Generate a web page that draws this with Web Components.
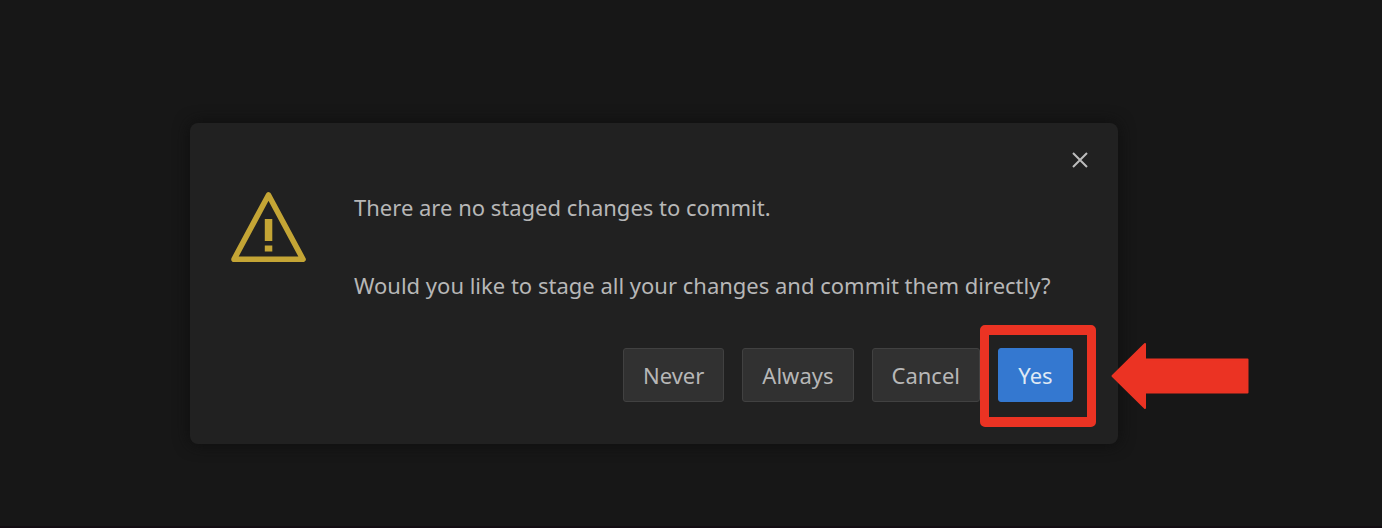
<!DOCTYPE html>
<html lang="en">
<head>
<meta charset="utf-8">
<meta name="viewport" content="width=device-width, initial-scale=1">
<title>Commit changes</title>
<style>
  html { height: 100%; }
  body { margin: 0; min-height: 100%; display: flex; background: #171717; color: #b7b7b7; font: 22px/39px "Noto Sans", "Open Sans", sans-serif; }
</style>
</head>
<body>
<app-backdrop>
  <message-dialog>
    <warning-icon slot="icon"></warning-icon>
    <p>There are no staged changes to commit.</p>
    <p>Would you like to stage all your changes and commit them directly?</p>
    <dialog-button slot="actions">Never</dialog-button>
    <dialog-button slot="actions">Always</dialog-button>
    <dialog-button slot="actions">Cancel</dialog-button>
    <callout-marker slot="actions"><dialog-button primary>Yes</dialog-button></callout-marker>
  </message-dialog>
</app-backdrop>
<script>
const define = (name, html) => {
  const template = document.createElement('template');
  template.innerHTML = html;
  customElements.define(name, class extends HTMLElement {
    constructor() {
      super();
      this.attachShadow({ mode: 'open' }).append(template.content.cloneNode(true));
    }
  });
};

define('app-backdrop', `
  <style>
    :host { box-sizing: border-box; flex: 1; display: flex; justify-content: center; align-items: center; padding: 41px 74px 0 0; border-bottom: 2px solid #130d12; }
  </style>
  <slot></slot>`);

define('warning-icon', `
  <style>
    :host { display: block; width: 76px; height: 72px; }
    svg { display: block; }
  </style>
  <svg width="76" height="72" viewBox="0 0 76 72" aria-hidden="true">
    <path d="M38.500 4 L73 68.300 H4 Z" fill="none" stroke="#c4a535" stroke-width="5.600" stroke-linejoin="round"/>
    <path d="M34.800 28h7.500v22h-7.500zM34.800 54.500h7.500v6h-7.500z" fill="#c4a535"/>
  </svg>`);

define('dialog-button', `
  <style>
    :host { display: block; }
    button { box-sizing: border-box; display: block; min-width: 75px; height: 54px; padding: 0 19px; border: 1px solid #414141; border-radius: 3px; background: #313131; color: inherit; font: inherit; line-height: 52px; white-space: nowrap; }
    :host([primary]) button { border-color: #3478d0; background: #3478d0; color: #dfe8f4; }
  </style>
  <button type="button"><slot></slot></button>`);

define('callout-marker', `
  <style>
    :host { display: block; position: relative; }
    .frame { position: absolute; inset: -23px -23px -25px -18px; border: 10px solid #eb3323; border-width: 10px 9px; border-radius: 5px; pointer-events: none; }
    .arrow { position: absolute; left: 100%; top: -6px; margin-left: 38px; pointer-events: none; }
  </style>
  <slot></slot>
  <span class="frame"></span>
  <svg class="arrow" width="138" height="68" viewBox="0 0 138 68" aria-hidden="true">
    <path d="M1.500 34 L34 2 V17.500 H136.500 V50.500 H34 V66 Z" fill="#eb3323" stroke="#eb3323" stroke-width="2" stroke-linejoin="round"/>
  </svg>`);

define('message-dialog', `
  <style>
    :host { box-sizing: border-box; display: block; width: 100%; max-width: 928px; padding: 21px 22px 42px 40px; border-radius: 8px; background: #212121; box-shadow: 0 0 16px #0e0e0e; }
    header { display: flex; justify-content: flex-end; }
    .close { width: 32px; height: 32px; padding: 8px; border: 0; background: none; color: #bcbcbc; }
    .close svg { display: block; }
    .body { display: flex; gap: 48px; margin-top: 12px; }
    .icon { padding-top: 3px; }
    .text ::slotted(*) { margin: 0; }
    .text { display: grid; gap: 39px; }
    footer { display: flex; justify-content: flex-end; gap: 18px; margin-top: 43px; padding-right: 23px; }
  </style>
  <header>
    <button class="close" type="button" aria-label="Close">
      <svg width="16" height="16" viewBox="0 0 16 16"><path d="M1 1 15 15M15 1 1 15" stroke="currentColor" stroke-width="2" fill="none"/></svg>
    </button>
  </header>
  <div class="body">
    <div class="icon"><slot name="icon"></slot></div>
    <div class="text"><slot></slot></div>
  </div>
  <footer><slot name="actions"></slot></footer>`);
</script>
</body>
</html>
